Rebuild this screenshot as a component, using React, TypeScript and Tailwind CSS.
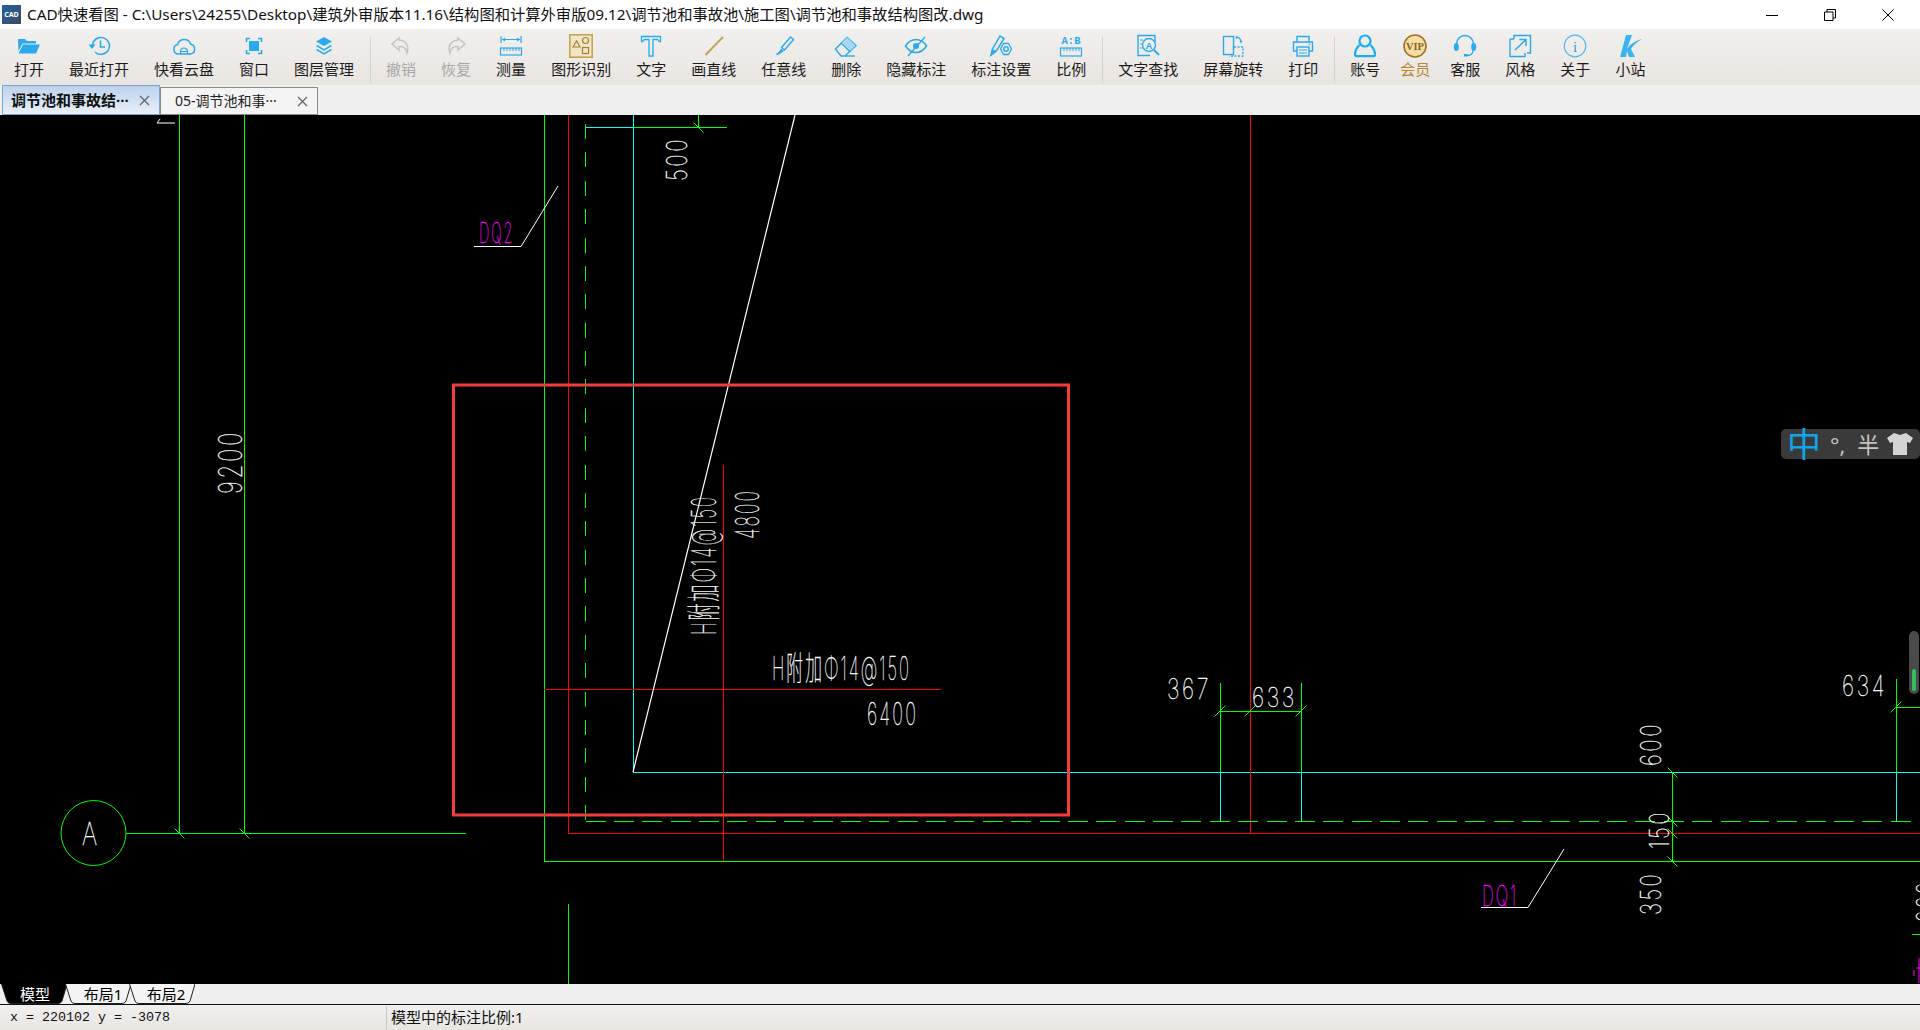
import type { ReactNode } from "react";

const B = "#2aa9ee";

const Svg = ({ children }: { children: ReactNode }) => (
  <svg width="24" height="24" viewBox="0 0 24 24" fill="none" stroke={B} strokeWidth="1.5">
    {children}
  </svg>
);

const icons: Record<string, ReactNode> = {
  open: (
    <Svg>
      <path stroke="none" fill={B} d="M1 5h7l2 2h9v2.5H5.5L1.5 17z" />
      <path stroke="none" fill={B} d="M6 10.5h17l-4 9H1.5z" />
    </Svg>
  ),
  recent: (
    <Svg>
      <path d="M5.5 11a8.5 8.5 0 1 1 2.5 7" />
      <path stroke="none" fill={B} d="M1.5 10.5h7l-3.5 4.5z" />
      <path d="M13.5 6.5V13h4.5" />
    </Svg>
  ),
  cloud: (
    <Svg>
      <path d="M6.5 20a4.8 4.8 0 0 1-.8-9.5 6.8 6.8 0 0 1 13-.2 4.9 4.9 0 0 1-.7 9.7z" />
      <path d="M8.5 20v-2.5a3.5 3.5 0 0 1 7 0V20M8.5 17.5h7" strokeWidth="1.2" />
    </Svg>
  ),
  window: (
    <Svg>
      <rect x="7" y="7" width="10" height="10" fill={B} stroke="none" />
      <path d="M4.5 8V4.5H8M16 4.5h3.5V8M19.5 16v3.5H16M8 19.5H4.5V16" strokeWidth="1.6" />
    </Svg>
  ),
  layers: (
    <Svg>
      <path stroke="none" fill={B} d="M12 3l8 4.5-8 4.5-8-4.5z" />
      <path d="M4.5 11.5l7.5 4.3 7.5-4.3M4.5 15.5l7.5 4.3 7.5-4.3" />
    </Svg>
  ),
  undo: (
    <Svg>
      <path stroke="#c4c4c4" d="M10 4L3 10l7 6v-3.5c4.5-.5 7 1 8 6.500 2.500-7-1-12.500-8-13z" />
    </Svg>
  ),
  redo: (
    <Svg>
      <path stroke="#c4c4c4" d="M14 4l7 6-7 6v-3.500c-4.500-.5-7 1-8 6.500-2.500-7 1-12.500 8-13z" />
    </Svg>
  ),
  measure: (
    <Svg>
      <path d="M2 2v7M22 2v7M3 5.500h18" strokeWidth="1.200" />
      <path d="M3 5.500l3-2v4zM21 5.500l-3-2v4z" fill={B} stroke="none" />
      <rect x="1.500" y="14" width="21" height="7" strokeWidth="1.200" />
      <path d="M5 14v3M8 14v3M11 14v3M14 14v3M17 14v3M20 14v3" strokeWidth="1" />
    </Svg>
  ),
  shapes: (
    <Svg>
      <rect x="0.800" y="0.800" width="22.400" height="22.400" fill="#f1e6c9" stroke="#c9a24e" strokeWidth="1.600" />
      <path d="M4 13l3.500-6 3.500 6z" stroke="#a8802c" strokeWidth="1.200" />
      <circle cx="16.500" cy="6.500" r="3" stroke="#a8802c" strokeWidth="1.200" />
      <rect x="13.500" y="13.500" width="6" height="6" stroke="#a8802c" strokeWidth="1.200" />
    </Svg>
  ),
  text: (
    <Svg>
      <path d="M2.500 2.500h19v5h-1L18.500 5.500H14V22h-4V5.500H5.500L3.500 7.500h-1z" strokeWidth="1.300" />
    </Svg>
  ),
  line: (
    <Svg>
      <path d="M3.500 21L21 3" stroke="#c2a25c" strokeWidth="2" />
    </Svg>
  ),
  pen: (
    <Svg>
      <path d="M9.500 13.500l9-10.500 3 2.500-9 10.500z" strokeWidth="1.400" />
      <path d="M9 14.500l3 2.500-3.500 2.500-3 1.500c-1 .3-1.500-.8-1-1.500 1.500-1 3.500-2 4.500-5z" fill={B} stroke="none" />
    </Svg>
  ),
  eraser: (
    <Svg>
      <path d="M1.500 15L13 3.500l9 8-11 10.500H7z" strokeWidth="1.400" />
      <path d="M7 9l9 8.500" strokeWidth="1.400" />
      <path d="M8 8.500l5-5 8.500 8-5 5z" fill="#a6d8f5" stroke="none" />
      <path d="M11 22h10" strokeWidth="1.400" />
    </Svg>
  ),
  eye: (
    <Svg>
      <path d="M1.500 12C5 6.500 10 5.500 12 5.500s7 1 10.500 6.500C19 17.500 14 18.500 12 18.500S5 17.500 1.500 12z" />
      <circle cx="12" cy="12" r="3" fill={B} stroke="none" />
      <path d="M4 22L21 3" strokeWidth="1.300" />
    </Svg>
  ),
  dim: (
    <Svg>
      <path d="M2 21l1.500-6L11 2l4 2.500L8 16z" strokeWidth="1.500" />
      <path d="M2 22l1-7 5 2.500z" fill={B} stroke="none" />
      <circle cx="17" cy="15" r="2.200" />
      <path d="M14.500 9.500h5l3 5.500-3 5.500h-5l-3-5.500z" strokeWidth="1.400" strokeLinejoin="round" />
    </Svg>
  ),
  ratio: (
    <Svg>
      <text x="12" y="10" textAnchor="middle" fontSize="10.500" fontWeight="700" fontFamily="Liberation Mono" fill={B} stroke="none">
        A:B
      </text>
      <rect x="1.500" y="14" width="21" height="8" strokeWidth="1.200" />
      <path d="M5 14v3M8 14v3M11 14v3M14 14v3M17 14v3M20 14v3" strokeWidth="1" />
    </Svg>
  ),
  find: (
    <Svg>
      <path d="M19 8V1.500H2v20h12" strokeWidth="1.400" />
      <circle cx="13" cy="11" r="6.500" strokeWidth="1.400" />
      <path d="M18 16l5 5" strokeWidth="1.800" />
      <text x="13" y="14.500" textAnchor="middle" fontSize="9.500" fontWeight="700" fontFamily="Liberation Sans" fill={B} stroke="none">
        A
      </text>
      <path d="M4 6h3M4 10h2M4 14h2" strokeWidth="1" />
    </Svg>
  ),
  rotate: (
    <Svg>
      <rect x="2.500" y="2.500" width="10" height="18" strokeWidth="1.400" />
      <path d="M13 13h9v9H8" strokeWidth="1.400" strokeDasharray="2 1.500" />
      <path d="M16 3c2 .5 3.500 2 4 4" strokeWidth="1.200" />
      <path d="M15 1.500l2 2.500-2.500 1zM18.500 7h3l-1.500 2.500z" fill={B} stroke="none" />
    </Svg>
  ),
  print: (
    <Svg>
      <path d="M6 8V2.500h12V8" strokeWidth="1.400" />
      <path d="M6 17H2.500V8h19v9H18" strokeWidth="1.400" />
      <rect x="6" y="13" width="12" height="9" strokeWidth="1.400" />
      <path d="M8 16h8M8 19h8" strokeWidth="1.100" />
      <circle cx="18.500" cy="10.500" r="0.800" fill={B} stroke="none" />
    </Svg>
  ),
  account: (
    <Svg>
      <circle cx="12" cy="7" r="5.500" stroke="#18aef5" strokeWidth="2.200" />
      <path d="M6.500 11C3.500 14 2 17.500 2 20.500c0 1 .5 1.700 1.500 1.700h17c1 0 1.500-.7 1.500-1.700 0-3-1.500-6.500-4.500-9.500" stroke="#18aef5" strokeWidth="2.200" />
    </Svg>
  ),
  vip: (
    <svg width="24" height="24" viewBox="0 0 24 24">
      <circle cx="12" cy="12" r="11" fill="#f3dfa6" stroke="#a86f24" strokeWidth="1.600" />
      <text x="12" y="15.800" textAnchor="middle" fontSize="10.500" fontWeight="700" fontFamily="Liberation Serif" fill="#8f5f16">
        VIP
      </text>
    </svg>
  ),
  service: (
    <Svg>
      <path d="M3.500 12V10a8.500 8.500 0 0 1 17 0v2" strokeWidth="1.500" />
      <ellipse cx="3.300" cy="13" rx="2.500" ry="4" fill={B} stroke="none" />
      <ellipse cx="20.700" cy="13" rx="2.500" ry="4" fill={B} stroke="none" />
      <path d="M20 16.500c0 3-2.500 5-6 5" strokeWidth="1.400" />
      <path d="M11 20h3.500v2.500H11z" fill={B} stroke="none" />
    </Svg>
  ),
  style: (
    <Svg>
      <path d="M6 5V1.500h16.500v17.500H19M2 5h4M2 5v17.500h15V19" strokeWidth="1.400" />
      <path d="M7 16L18 5.500M11.500 5.500H18V12" strokeWidth="1.500" />
    </Svg>
  ),
  about: (
    <Svg>
      <circle cx="12" cy="12" r="10.800" stroke="#55b8ee" strokeWidth="1.200" />
      <text x="12" y="18" textAnchor="middle" fontSize="15" fontFamily="Liberation Serif" fill="#2aa0e0" stroke="none">
        i
      </text>
    </Svg>
  ),
  site: (
    <svg width="24" height="24" viewBox="0 0 24 24">
      <path fill="#39b4ee" d="M8 1h6L9 15c3-5 8-8 15-10-5 3-9 6-11 10l4 8h-6l-2-6-1 6H2z" />
    </svg>
  ),
};

type Tool = { icon: string; label: string; cls?: string };

const group1: Tool[] = [
  { icon: "open", label: "打开" },
  { icon: "recent", label: "最近打开" },
  { icon: "cloud", label: "快看云盘" },
  { icon: "window", label: "窗口" },
  { icon: "layers", label: "图层管理" },
];
const group2: Tool[] = [
  { icon: "undo", label: "撤销", cls: "text-[#a8a8a8]" },
  { icon: "redo", label: "恢复", cls: "text-[#a8a8a8]" },
  { icon: "measure", label: "测量" },
  { icon: "shapes", label: "图形识别" },
  { icon: "text", label: "文字" },
  { icon: "line", label: "画直线" },
  { icon: "pen", label: "任意线" },
  { icon: "eraser", label: "删除" },
  { icon: "eye", label: "隐藏标注" },
  { icon: "dim", label: "标注设置" },
  { icon: "ratio", label: "比例" },
];
const group3: Tool[] = [
  { icon: "find", label: "文字查找" },
  { icon: "rotate", label: "屏幕旋转" },
  { icon: "print", label: "打印" },
];
const group4: Tool[] = [
  { icon: "account", label: "账号" },
  { icon: "vip", label: "会员", cls: "text-[#b8862e]" },
  { icon: "service", label: "客服" },
];
const group5: Tool[] = [
  { icon: "style", label: "风格" },
  { icon: "about", label: "关于" },
  { icon: "site", label: "小站" },
];

function ToolItem({ tool }: { tool: Tool }) {
  return (
    <div className={`flex flex-col items-center ${tool.cls ?? "text-[#1c1c1c]"}`}>
      <div className="flex h-[26px] items-center justify-center">{icons[tool.icon]}</div>
      <span className="whitespace-nowrap text-[15px] leading-[20px]">{tool.label}</span>
    </div>
  );
}

const Sep = () => <div className="mx-[16px] mt-[4px] h-[46px] w-px bg-[#d4d2cf]" />;

function CloseX() {
  return (
    <svg width="11" height="11" viewBox="0 0 11 11" stroke="#666" strokeWidth="1.300">
      <path d="M1 1l9 9M10 1l-9 9" />
    </svg>
  );
}

const G = "#00ff00";
const R = "#ff0000";
const C = "#00ffff";
const CAD_FONT = "Inter, 'Noto Sans CJK SC', sans-serif";

// text box given by baseline start, cap height and run length
function CadText(props: { x: number; y: number; h: number; len: number; up?: boolean; color?: string; children: string }) {
  const { x, y, h, len, up, color = "#fff", children } = props;
  return (
    <text
      transform={`translate(${x} ${y})${up ? " rotate(-90)" : ""}`}
      fontFamily={CAD_FONT}
      fontWeight={100}
      fontSize={h / 0.73}
      letterSpacing="0.12em"
      textLength={len + 3}
      lengthAdjust="spacingAndGlyphs"
      fill={color}
      stroke={color}
      strokeWidth={0.35}
    >
      {children}
    </text>
  );
}

const Tick = ({ x, y, flip }: { x: number; y: number; flip?: boolean }) =>
  flip ? (
    <line x1={x - 5.5} y1={y + 5.5} x2={x + 5.5} y2={y - 5.5} stroke={G} />
  ) : (
    <line x1={x - 4.5} y1={y - 4.5} x2={x + 5.5} y2={y + 5.5} stroke={G} />
  );

function Drawing() {
  const lines: [number, number, number, number, string][] = [
    [179.5, 115, 179.5, 833, G],
    [244.5, 115, 244.5, 833, G],
    [126, 833.5, 466, 833.5, G],
    [544.5, 115, 544.5, 861, G],
    [544, 861.5, 1920, 861.5, G],
    [568.5, 115, 568.5, 833, R],
    [568, 833.5, 1920, 833.5, R],
    [568.5, 904, 568.5, 984, G],
    [585, 127.5, 633, 127.5, C],
    [633, 127.5, 727, 127.5, G],
    [698.5, 115, 698.5, 127, G],
    [633.5, 115, 633.5, 772, C],
    [633, 772.5, 1920, 772.5, C],
    [723.5, 465, 723.5, 861, R],
    [544, 689.5, 941, 689.5, R],
    [1250.5, 115, 1250.5, 833, R],
    [1220.5, 683, 1220.5, 772, G],
    [1301.5, 683, 1301.5, 772, G],
    [1220.5, 772, 1220.5, 821, C],
    [1301.5, 772, 1301.5, 821, C],
    [1220, 711.5, 1301, 711.5, G],
    [1896.5, 679, 1896.5, 772, G],
    [1896.5, 772, 1896.5, 821, C],
    [1896, 707.5, 1920, 707.5, G],
    [1672.5, 772, 1672.5, 861, G],
    [1912, 934.5, 1920, 934.5, G],
  ];
  return (
    <svg className="block h-full w-full" viewBox="0 115 1920 869" shapeRendering="crispEdges">
      {lines.map(([x1, y1, x2, y2, c], i) => (
        <line key={i} x1={x1} y1={y1} x2={x2} y2={y2} stroke={c} />
      ))}
      <line x1="585.5" y1="821.5" x2="1912" y2="821.5" stroke={G} strokeDasharray="20 8.375" />
      <line x1="585.5" y1="821" x2="585.5" y2="99.500" stroke={G} strokeDasharray="15 13.375" strokeDashoffset="-1" />
      <g shapeRendering="auto">
        <Tick x={698} y={127} />
        <Tick x={179} y={833} />
        <Tick x={244} y={833} />
        <Tick x={1672} y={772} />
        <Tick x={1672} y={821} />
        <Tick x={1672} y={833} />
        <Tick x={1672} y={861} />
        <Tick x={1220} y={711} flip />
        <Tick x={1250} y={711} flip />
        <Tick x={1301} y={711} flip />
        <Tick x={1896} y={707} flip />
        <line x1="795" y1="115" x2="633" y2="772" stroke="#fff" strokeWidth="1.2" />
        <polyline points="474,246.500 521,246.500 558,186" fill="none" stroke="#fff" />
        <polyline points="1481,907.500 1528,907.500 1564,849" fill="none" stroke="#fff" />
        <polyline points="175,123 157,123 160,119" fill="none" stroke="#fff" />
        <circle cx="93.500" cy="833" r="32.500" fill="none" stroke={G} />
        <rect x="453.500" y="385" width="615" height="430" fill="none" stroke="#f23d3d" strokeWidth="3" />
        <path d="M1919 958v25M1916 968h4M1914 970v6" stroke="#ff00ff" fill="none" />
        <CadText x={242} y={494} h={24} len={61} up>9200</CadText>
        <CadText x={687} y={181} h={21} len={41} up>500</CadText>
        <CadText x={759} y={539} h={24} len={47} up>4800</CadText>
        <CadText x={716} y={635} h={25} len={137} up>H附加Φ14@150</CadText>
        <CadText x={772} y={680} h={24} len={136}>H附加Φ14@150</CadText>
        <CadText x={867} y={725} h={23} len={48}>6400</CadText>
        <CadText x={1167} y={699} h={21} len={41}>367</CadText>
        <CadText x={1252} y={707} h={20} len={42}>633</CadText>
        <CadText x={1842} y={696} h={21} len={42}>634</CadText>
        <CadText x={1661} y={766} h={21} len={41} up>600</CadText>
        <CadText x={1669} y={849} h={20} len={36} up>150</CadText>
        <CadText x={1661} y={915} h={21} len={40} up>350</CadText>
        <CadText x={1937} y={922} h={21} len={39} up>000</CadText>
        <CadText x={82} y={845} h={23} len={15}>A</CadText>
        <CadText x={479} y={243} h={21} len={32} color="#ff00ff">DQ2</CadText>
        <CadText x={1482} y={906} h={21} len={33} color="#ff00ff">DQ1</CadText>
      </g>
    </svg>
  );
}

function LayoutTab({ label, active, cls }: { label: string; active?: boolean; cls: string }) {
  return (
    <div className={`relative -mr-[2px] flex h-[20px] w-[66px] items-center justify-center text-[15px] leading-none ${active ? "text-white" : "text-black"} ${cls}`}>
      <svg className="absolute inset-0" width="66" height="20" viewBox="0 0 66 20">
        <path d="M0.500 0L6 17q1 2.500 4 2.500h47q3 0 4-2.500L66 0" fill={active ? "#000" : "#f4f4f4"} stroke="#222" />
      </svg>
      <span className="relative">{label}</span>
    </div>
  );
}

export default function App() {
  return (
    <div className="flex h-screen w-full flex-col overflow-hidden bg-white font-['Noto_Sans','Noto_Sans_CJK_SC',sans-serif]">
      {/* title bar */}
      <div className="flex h-[29px] shrink-0 items-center bg-white">
        <div className="ml-[2px] flex h-[19px] w-[19px] items-center justify-center bg-gradient-to-br from-[#1d5fa8] to-[#3a4a5c] text-[7px] font-bold leading-none text-white">
          CAD
        </div>
        <span className="ml-[6px] whitespace-nowrap text-[15.300px] leading-none text-[#111]">
          CAD快速看图 - C:\Users\24255\Desktop\建筑外审版本11.16\结构图和计算外审版09.12\调节池和事故池\施工图\调节池和事故结构图改.dwg
        </span>
        <div className="ml-auto mr-[3px] flex">
          <div className="flex h-[29px] w-[58px] items-center justify-center">
            <svg width="12" height="12" stroke="#000"><path d="M0 6.500h12" /></svg>
          </div>
          <div className="flex h-[29px] w-[58px] items-center justify-center">
            <svg width="12" height="12" fill="none" stroke="#000"><path d="M0.500 3h8.500v8.500H0.500zM3 3V0.500h8.500V9H9" /></svg>
          </div>
          <div className="flex h-[29px] w-[58px] items-center justify-center">
            <svg width="12" height="12" stroke="#000"><path d="M0.500 0.500l11 11M11.500 0.500l-11 11" /></svg>
          </div>
        </div>
      </div>

      {/* toolbar */}
      <div className="flex h-[56px] shrink-0 bg-gradient-to-b from-[#f1f0ee] to-[#e9e5e1] pl-[14px] pt-[4px]">
        <div className="flex gap-[25px]">{group1.map((t) => <ToolItem key={t.label} tool={t} />)}</div>
        <Sep />
        <div className="ml-[-1px] flex gap-[25px]">{group2.map((t) => <ToolItem key={t.label} tool={t} />)}</div>
        <Sep />
        <div className="ml-[-1px] flex gap-[25px]">{group3.map((t) => <ToolItem key={t.label} tool={t} />)}</div>
        <Sep />
        <div className="ml-[-1px] flex gap-[20px]">{group4.map((t) => <ToolItem key={t.label} tool={t} />)}</div>
        <div className="ml-[25px] flex gap-[25px]">{group5.map((t) => <ToolItem key={t.label} tool={t} />)}</div>
      </div>

      {/* drawing tabs */}
      <div className="flex h-[30px] shrink-0 items-end bg-[#f0f0f0] pl-[2px]">
        <div className="flex h-[30px] w-[158px] items-center border border-[#7ba3d3] bg-gradient-to-b from-[#bcd2ea] to-[#e9f0f8] pl-[8px] text-[15px] font-bold leading-none text-[#111]">
          <span className="w-[128px] whitespace-nowrap">调节池和事故结···</span>
          <CloseX />
        </div>
        <div className="flex h-[28px] w-[158px] items-center border border-[#8a8a8a] bg-[#f4f4f4] pl-[14px] text-[14px] leading-none text-[#222]">
          <span className="w-[122px] whitespace-nowrap">05-调节池和事···</span>
          <CloseX />
        </div>
      </div>

      {/* canvas */}
      <div className="relative min-h-0 flex-1 bg-black">
        <Drawing />
        <div className="absolute right-0 top-[314px] flex h-[30px] w-[139px] items-center rounded-[5px] bg-[#3a3a3a] pl-[6px] leading-none text-[#c4c4c4]">
          <span className="text-[34px] leading-none text-[#0ea5e9]">中</span>
          <span className="ml-[9px] text-[22px] leading-none">°,</span>
          <span className="ml-[12px] text-[22px] leading-none">半</span>
          <svg className="ml-[7px]" width="28" height="24" viewBox="0 0 28 24" fill="#d4d4d4">
            <path d="M8 1l6 2 6-2 7 5-3 5-3-1v13H7V10l-3 1-3-5z" />
          </svg>
        </div>
        <div className="absolute right-[1px] top-[516px] h-[63px] w-[10px] rounded-[5px] bg-[#4a4a4a]">
          <div className="absolute bottom-[3px] left-[3px] h-[22px] w-[4px] rounded-[2px] bg-[#2fbf5f]" />
        </div>
      </div>

      {/* layout tabs */}
      <div className="flex h-[21px] shrink-0 border-b border-[#111] bg-[#f0f0f0] pl-[1px]">
        <LayoutTab label="模型" active cls="pl-[2px]" />
        <LayoutTab label="布局1" cls="pl-[10px]" />
        <LayoutTab label="布局2" cls="pl-[8px]" />
      </div>

      {/* status bar */}
      <div className="flex h-[25px] shrink-0 items-center bg-gradient-to-b from-[#f0f0f0] to-[#e9e5e1]">
        <span className="w-[386px] whitespace-nowrap pl-[10px] font-['Liberation_Mono',monospace] text-[13.330px] leading-none text-[#111]">
          x = 220102 y = -3078
        </span>
        <div className="h-[24px] w-px bg-[#c8c8c8]" />
        <span className="ml-[4px] whitespace-nowrap text-[15px] leading-none text-[#111]">模型中的标注比例:1</span>
      </div>
    </div>
  );
}
